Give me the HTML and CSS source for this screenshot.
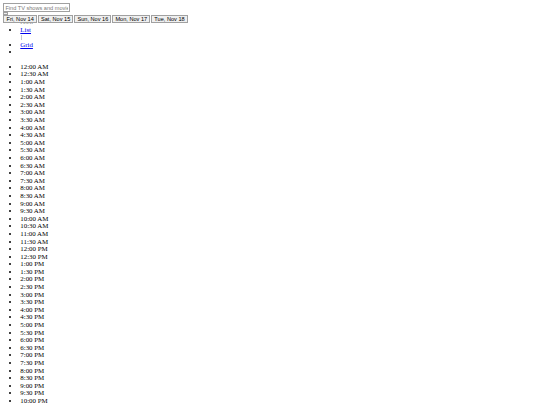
FILE: index.html
```html
<!DOCTYPE html>
<html>
<head>
<meta charset="utf-8">
<title>TV Guide</title>
<link rel="stylesheet" href="styles.css">
</head>
<body>
<div class="search"><input type="text" placeholder="Find TV shows and movies"></div>
<button class="empty"></button>
<div class="days"><button>Fri, Nov 14</button><button>Sat, Nov 15</button><button>Sun, Nov 16</button><button>Mon, Nov 17</button><button>Tue, Nov 18</button></div>
<ul class="views">
  <li class="peek">Now</li>
  <li><a href="#">List</a><div class="sep"></div></li>
  <li><a href="#">Grid</a></li>
  <li></li>
</ul>
<ul class="times">
  <li>12:00 AM</li><li>12:30 AM</li><li>1:00 AM</li><li>1:30 AM</li><li>2:00 AM</li><li>2:30 AM</li>
  <li>3:00 AM</li><li>3:30 AM</li><li>4:00 AM</li><li>4:30 AM</li><li>5:00 AM</li><li>5:30 AM</li>
  <li>6:00 AM</li><li>6:30 AM</li><li>7:00 AM</li><li>7:30 AM</li><li>8:00 AM</li><li>8:30 AM</li>
  <li>9:00 AM</li><li>9:30 AM</li><li>10:00 AM</li><li>10:30 AM</li><li>11:00 AM</li><li>11:30 AM</li>
  <li>12:00 PM</li><li>12:30 PM</li><li>1:00 PM</li><li>1:30 PM</li><li>2:00 PM</li><li>2:30 PM</li>
  <li>3:00 PM</li><li>3:30 PM</li><li>4:00 PM</li><li>4:30 PM</li><li>5:00 PM</li><li>5:30 PM</li>
  <li>6:00 PM</li><li>6:30 PM</li><li>7:00 PM</li><li>7:30 PM</li><li>8:00 PM</li><li>8:30 PM</li>
  <li>9:00 PM</li><li>9:30 PM</li><li>10:00 PM</li><li>10:30 PM</li><li>11:00 PM</li><li>11:30 PM</li>
</ul>
</body>
</html>
```
FILE: styles.css
```css
body {
  margin: 3px 3.4px;
  font-family: "Liberation Serif", "Times New Roman", serif;
  font-size: 6.9px;
  line-height: 7.6px;
  background: #fff;
  color: #000;
}
.search {
  display: flex;
}
.search input {
  box-sizing: border-box;
  width: 67px;
  height: 9px;
  margin: 0;
  padding: 0 1px;
  border: 0.6px solid #a0a0a0;
  border-radius: 0;
  font-family: "Liberation Sans", Arial, sans-serif;
  font-size: 5.6px;
  background: #fff;
}
.search input::placeholder {
  color: #7a7a7a;
}
.empty {
  display: block;
  box-sizing: border-box;
  width: 5px;
  height: 2.6px;
  margin: 0;
  padding: 0;
  border: 0.6px solid #a0a0a0;
  border-radius: 0;
  background: #efefef;
}
.days {
  position: relative;
  z-index: 1;
  display: flex;
  gap: 1px;
  margin-top: 0.5px;
}
.days button {
  box-sizing: border-box;
  height: 8px;
  margin: 0;
  padding: 0 2.1px;
  border: 0.6px solid #a0a0a0;
  border-radius: 0;
  background: #efefef;
  color: #000;
  font-family: "Liberation Sans", Arial, sans-serif;
  font-size: 5.6px;
  line-height: 6.5px;
}
ul {
  margin: 6.75px 0;
  padding-left: 16.9px;
}
.views {
  margin-top: -5px;
}
.views li {
  min-height: 7.6px;
}
.peek {
  list-style: none;
  color: #777;
}
a {
  color: #0000ee;
  text-decoration: underline;
}
.sep {
  width: 0.8px;
  height: 5.6px;
  margin: 1.6px 0 0.4px 0.6px;
  background: #c4c4cc;
}
.times {
  margin-top: 6.8px;
}
```
